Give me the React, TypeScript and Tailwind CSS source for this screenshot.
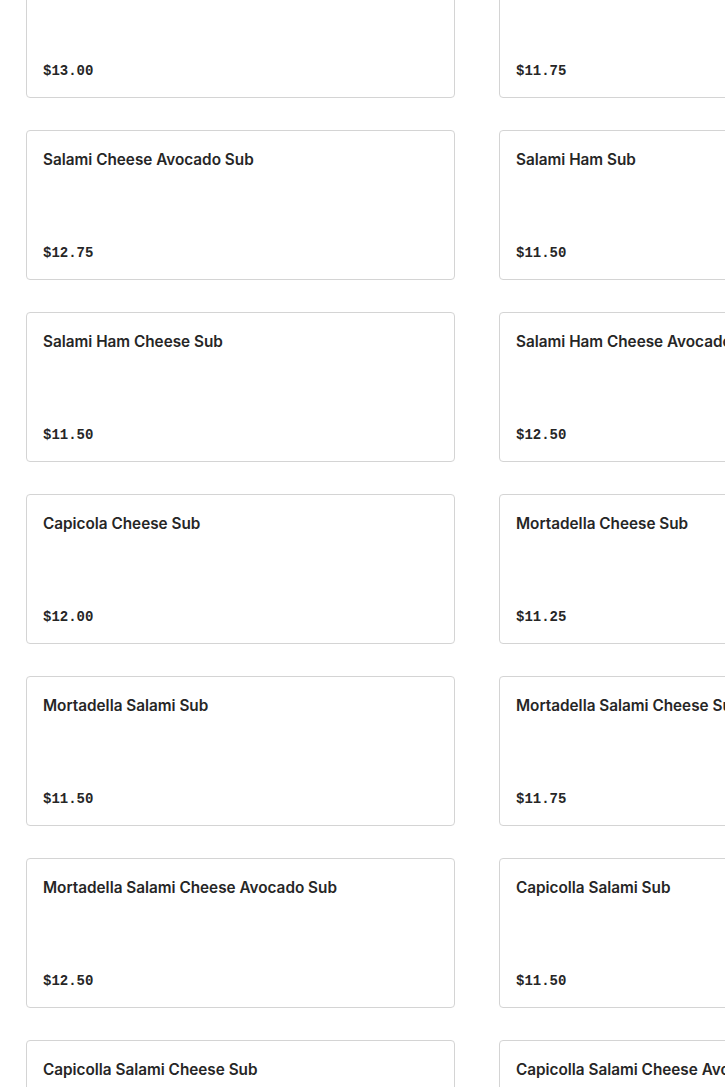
import React from "react";

const items: [string, string][] = [
  ["", "$13.00"],
  ["", "$11.75"],
  ["Salami Cheese Avocado Sub", "$12.75"],
  ["Salami Ham Sub", "$11.50"],
  ["Salami Ham Cheese Sub", "$11.50"],
  ["Salami Ham Cheese Avocado Sub", "$12.50"],
  ["Capicola Cheese Sub", "$12.00"],
  ["Mortadella Cheese Sub", "$11.25"],
  ["Mortadella Salami Sub", "$11.50"],
  ["Mortadella Salami Cheese Sub", "$11.75"],
  ["Mortadella Salami Cheese Avocado Sub", "$12.50"],
  ["Capicolla Salami Sub", "$11.50"],
  ["Capicolla Salami Cheese Sub", "$12.00"],
  ["Capicolla Salami Cheese Avocado Sub", "$12.75"],
];

export default function App() {
  return (
    <div className="w-[725px] h-[1087px] overflow-hidden bg-white">
      <div className="grid grid-cols-[429px_429px] gap-x-[44px] gap-y-[32px] pl-[26px] -mt-[52px]">
        {items.map(([name, price], i) => (
          <div
            key={i}
            className="h-[150px] border border-[#d4d4d4] rounded-[4px] bg-white flex flex-col justify-between px-4 pt-[19px] pb-[16px]"
          >
            <div
              className="text-[15.3px] leading-5 font-semibold text-[#262626] whitespace-nowrap"
              style={{ fontFamily: "Inter, 'Liberation Sans', sans-serif" }}
            >
              {name}
            </div>
            <div
              className="text-[14px] leading-5 font-bold text-[#262626]"
              style={{ fontFamily: "'Liberation Mono', monospace" }}
            >
              {price}
            </div>
          </div>
        ))}
      </div>
    </div>
  );
}
